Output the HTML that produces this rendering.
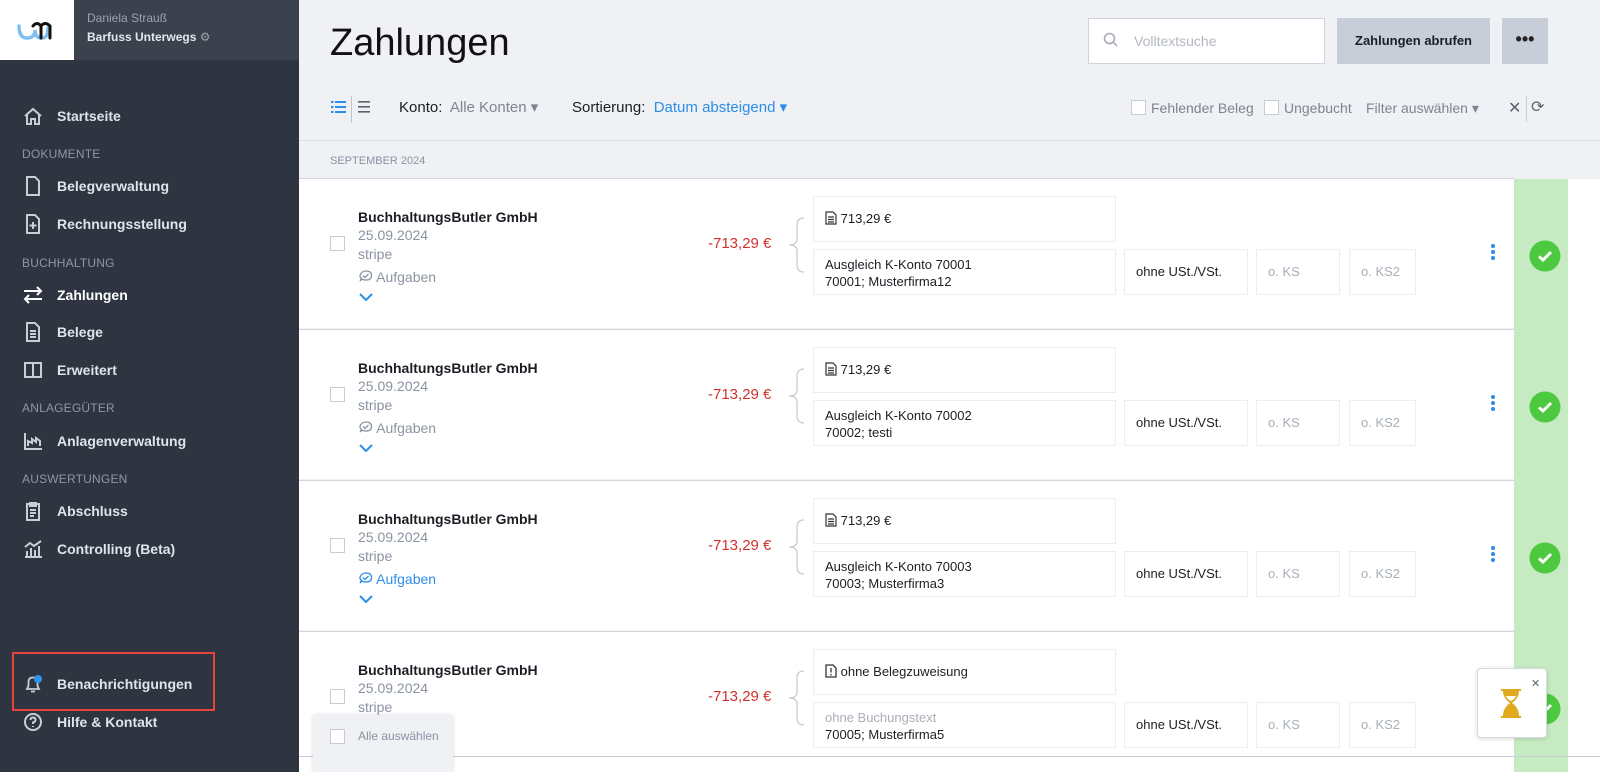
<!DOCTYPE html>
<html><head><meta charset="utf-8"><style>
*{box-sizing:border-box;margin:0;padding:0}
body{width:1600px;height:772px;overflow:hidden;font-family:"Liberation Sans",sans-serif;background:#eff1f5;position:relative;color:#222}
.a{position:absolute}
#sb{left:0;top:0;width:299px;height:772px;background:#2f3540}
#sbh{left:74px;top:0;width:225px;height:60px;background:#3b414d}
#logo{left:0;top:0;width:74px;height:60px;background:#fff}
.nav{left:57px;font-size:14px;color:#dfe3ea;font-weight:bold;white-space:nowrap}
.sec{left:22px;font-size:12px;color:#8e97a6;letter-spacing:.2px}
.ic{left:22px;width:22px;height:22px}
.row{left:299px;width:1215px;height:150px;background:#fff;border-top:1px solid #d3d7dd}
.nm{font-size:14px;font-weight:bold;color:#1b1e24}
.gr{font-size:14px;color:#8a93a1}
.box{border:1px solid #eceef1;background:#fff;font-size:13px;color:#1b1e24}
.cb{width:15px;height:15px;border:1px solid #c8ccd3;background:#fff}
</style></head><body>
<div id="sb" class="a"></div>
<div id="sbh" class="a"></div>
<div id="logo" class="a"><svg width="74" height="60"><path d="M19 26 q0 12 8 12 q8 0 8-8 q0 8 7 8 q6 0 6-10" fill="none" stroke="#7fc0f0" stroke-width="3.5" stroke-linecap="round"/><path d="M33 26 q4-5 8 0 v12 M41 26 q4-5 9 0 v12" fill="none" stroke="#111" stroke-width="3" stroke-linecap="round"/></svg></div>
<div class="a" style="left:87px;top:11px;font-size:12px;color:#9aa3b0">Daniela Strauß</div>
<div class="a" style="left:87px;top:30px;font-size:12px;color:#e4e7ec;font-weight:bold">Barfuss Unterwegs <span style="color:#9aa3b0;font-weight:normal">⚙</span></div>

<svg class="a ic" style="top:105px" viewBox="0 0 22 22"><path d="M3 11 L11 4 L19 11 M5 10 V19 H9 V14 H13 V19 H17 V10" fill="none" stroke="#c9ced6" stroke-width="2"/></svg>
<div class="a nav" style="top:108px">Startseite</div>
<div class="a sec" style="top:147px">DOKUMENTE</div>
<svg class="a ic" style="top:175px" viewBox="0 0 22 22"><path d="M5 2 H13 L17 6 V20 H5 Z" fill="none" stroke="#c9ced6" stroke-width="2"/></svg>
<div class="a nav" style="top:178px">Belegverwaltung</div>
<svg class="a ic" style="top:213px" viewBox="0 0 22 22"><path d="M5 2 H13 L17 6 V20 H5 Z M11 9 V16 M7.5 12.5 H14.5" fill="none" stroke="#c9ced6" stroke-width="2"/></svg>
<div class="a nav" style="top:216px">Rechnungsstellung</div>
<div class="a sec" style="top:256px">BUCHHALTUNG</div>
<svg class="a ic" style="top:284px" viewBox="0 0 22 22"><path d="M2 7 H19 M15 3 L19 7 L15 11 M20 15 H3 M7 11 L3 15 L7 19" fill="none" stroke="#fff" stroke-width="2"/></svg>
<div class="a nav" style="top:287px;color:#fff">Zahlungen</div>
<svg class="a ic" style="top:321px" viewBox="0 0 22 22"><path d="M5 2 H13 L17 6 V20 H5 Z M8 10 H14 M8 13 H14 M8 16 H14" fill="none" stroke="#c9ced6" stroke-width="2"/></svg>
<div class="a nav" style="top:324px">Belege</div>
<svg class="a ic" style="top:359px" viewBox="0 0 22 22"><path d="M3 4 H19 V18 H3 Z M11 4 V18" fill="none" stroke="#c9ced6" stroke-width="2"/></svg>
<div class="a nav" style="top:362px">Erweitert</div>
<div class="a sec" style="top:401px">ANLAGEGÜTER</div>
<svg class="a ic" style="top:430px" viewBox="0 0 22 22"><path d="M3 3 V19 H20 M6 16 V11 L10 13 V9 L14 12 V8 L18 11 V16" fill="none" stroke="#c9ced6" stroke-width="2"/></svg>
<div class="a nav" style="top:433px">Anlagenverwaltung</div>
<div class="a sec" style="top:472px">AUSWERTUNGEN</div>
<svg class="a ic" style="top:500px" viewBox="0 0 22 22"><path d="M5 4 H17 V20 H5 Z M8 3 H14 V6 H8 Z M8 10 H14 M8 13 H14 M8 16 H12" fill="none" stroke="#c9ced6" stroke-width="2"/></svg>
<div class="a nav" style="top:503px">Abschluss</div>
<svg class="a ic" style="top:538px" viewBox="0 0 22 22"><path d="M3 19 H20 M5 19 V13 M9 19 V10 M13 19 V12 M17 19 V8 M3 9 L8 5 L12 8 L19 3" fill="none" stroke="#c9ced6" stroke-width="2"/></svg>
<div class="a nav" style="top:541px">Controlling (Beta)</div>

<div class="a" style="left:12px;top:652px;width:203px;height:59px;border:2px solid #e5463b"></div>
<svg class="a ic" style="top:673px" viewBox="0 0 22 22"><path d="M5 16 H17 L15.5 13 V9 Q15.5 4.5 11 4.5 Q6.5 4.5 6.5 9 V13 Z M9 18.5 H13" fill="none" stroke="#c9ced6" stroke-width="1.8"/><circle cx="16" cy="6" r="4" fill="#2c95f0"/></svg>
<div class="a nav" style="top:676px">Benachrichtigungen</div>
<svg class="a ic" style="top:711px" viewBox="0 0 22 22"><circle cx="11" cy="11" r="8" fill="none" stroke="#c9ced6" stroke-width="2"/><path d="M8.5 9 Q8.5 6.5 11 6.5 Q13.5 6.5 13.5 9 Q13.5 10.5 11 11.5 V13 M11 15 V16" fill="none" stroke="#c9ced6" stroke-width="2"/></svg>
<div class="a nav" style="top:714px">Hilfe &amp; Kontakt</div>

<div class="a" style="left:330px;top:22px;font-size:38px;color:#111">Zahlungen</div>
<div class="a" style="left:1088px;top:18px;width:237px;height:46px;background:#fff;border:1px solid #cfd3da"></div>
<svg class="a" style="left:1103px;top:32px" width="16" height="16"><circle cx="6.5" cy="6.5" r="5" fill="none" stroke="#a3a9b3" stroke-width="1.5"/><path d="M10 10 L14 14" stroke="#a3a9b3" stroke-width="1.5"/></svg>
<div class="a" style="left:1134px;top:33px;font-size:14px;color:#b3b8c0">Volltextsuche</div>
<div class="a" style="left:1337px;top:18px;width:153px;height:46px;background:#c8ced8;font-size:13px;font-weight:bold;color:#1b1e24;text-align:center;line-height:46px">Zahlungen abrufen</div>
<div class="a" style="left:1502px;top:18px;width:46px;height:46px;background:#c8ced8;font-size:18px;font-weight:bold;text-align:center;line-height:42px">•••</div>

<svg class="a" style="left:331px;top:100px" width="16" height="14"><g fill="#2c8ee8"><rect x="0" y="1" width="2.5" height="2"/><rect x="4" y="1" width="11" height="2"/><rect x="0" y="6" width="2.5" height="2"/><rect x="4" y="6" width="11" height="2"/><rect x="0" y="11" width="2.5" height="2"/><rect x="4" y="11" width="11" height="2"/></g></svg>
<div class="a" style="left:351px;top:96px;width:1px;height:27px;background:#bfc4cc"></div>
<svg class="a" style="left:357px;top:100px" width="14" height="14"><g fill="#5b6270"><rect x="1" y="1" width="12" height="1.6"/><rect x="1" y="6" width="12" height="1.6"/><rect x="1" y="11" width="12" height="1.6"/></g></svg>
<div class="a" style="left:399px;top:98px;font-size:15px;color:#1b1e24">Konto:&nbsp; <span style="color:#7d8591">Alle Konten ▾</span></div>
<div class="a" style="left:572px;top:98px;font-size:15px;color:#1b1e24">Sortierung:&nbsp; <span style="color:#2c8ee8">Datum absteigend ▾</span></div>
<div class="a cb" style="left:1131px;top:100px"></div>
<div class="a" style="left:1151px;top:100px;font-size:14px;color:#7d8591">Fehlender Beleg</div>
<div class="a cb" style="left:1264px;top:100px"></div>
<div class="a" style="left:1284px;top:100px;font-size:14px;color:#7d8591">Ungebucht</div>
<div class="a" style="left:1366px;top:100px;font-size:14px;color:#7d8591">Filter auswählen ▾</div>
<div class="a" style="left:1508px;top:98px;font-size:16px;color:#5b6270">✕</div>
<div class="a" style="left:1526px;top:96px;width:1px;height:26px;background:#c8ccd3"></div>
<div class="a" style="left:1531px;top:97px;font-size:16px;color:#5b6270">⟳</div>
<div class="a" style="left:299px;top:140px;width:1301px;height:1px;background:#d6dbe3"></div>
<div class="a" style="left:330px;top:155px;font-size:11px;color:#8a93a1">SEPTEMBER 2024</div>

<div class="a" style="left:1514px;top:179px;width:54px;height:593px;background:#c6ebc2"></div>
<div class="a" style="left:1568px;top:179px;width:32px;height:593px;background:#fff"></div>

<!-- rows -->
<div class="a row" style="top:178px"></div>
<div class="a row" style="top:329px"></div>
<div class="a row" style="top:480px"></div>
<div class="a row" style="top:631px;height:141px"></div>
<div class="a" style="left:299px;top:756px;width:1301px;height:1px;background:#c8ccd3"></div>

<div id="rows"></div>
<script>
var d=[["70001","70001; Musterfirma12",0],["70002","70002; testi",0],["70003","70003; Musterfirma3",1],["","70005; Musterfirma5",2]];
var h="";
d.forEach(function(r,i){var T=179+i*151;
h+='<div class="a nm" style="left:358px;top:'+(T+30)+'px">BuchhaltungsButler GmbH</div>';
h+='<div class="a cb" style="left:330px;top:'+(T+57)+'px"></div>';
h+='<div class="a gr" style="left:358px;top:'+(T+48)+'px">25.09.2024</div>';
h+='<div class="a gr" style="left:358px;top:'+(T+67)+'px">stripe</div>';
if(i<3){var c=r[2]==1?'#2c8ee8':'#8a93a1';
h+='<div class="a" style="left:358px;top:'+(T+90)+'px;font-size:14px;color:'+c+'"><svg width="15" height="13" style="vertical-align:-1px"><path d="M2 11 L3.5 8.5 Q1 6.5 2.5 4 Q4.5 1 8 1 Q13.5 1 13.5 5.5 Q13.5 10 8 10 Q5 10 4 9 Z M5 5.5 L7 7.5 L10.5 4" fill="none" stroke="'+c+'" stroke-width="1.3"/></svg> Aufgaben</div>';
h+='<svg class="a" style="left:359px;top:'+(T+114)+'px" width="14" height="9"><path d="M1 1 L7 7 L13 1" fill="none" stroke="#2c8ee8" stroke-width="2"/></svg>';}
h+='<div class="a" style="left:708px;top:'+(T+56)+'px;font-size:15px;color:#d0312d">-713,29 €</div>';
h+='<svg class="a" style="left:786px;top:'+(T+38)+'px" width="20" height="56"><path d="M18 1 Q11 1 11 8 V22 Q11 28 3 28 Q11 28 11 34 V48 Q11 55 18 55" fill="none" stroke="#c8ccd3" stroke-width="1.3"/></svg>';
h+='<div class="a box" style="left:813px;top:'+(T+17)+'px;width:303px;height:46px;padding:14px 0 0 11px">'+(i<3?'<svg width="12" height="14" style="vertical-align:-2px"><path d="M1 1 H8 L11 4 V13 H1 Z M3 6 H9 M3 8.5 H9 M3 11 H9" fill="none" stroke="#333" stroke-width="1.2"/></svg> 713,29 €':'<svg width="12" height="14" style="vertical-align:-2px"><path d="M1 1 H8 L11 4 V13 H1 Z M6 4 V8.5 M6 10 V11.5" fill="none" stroke="#333" stroke-width="1.3"/></svg> ohne Belegzuweisung')+'</div>';
h+='<div class="a box" style="left:813px;top:'+(T+70)+'px;width:303px;height:46px;padding:6px 0 0 11px;line-height:17px">'+(r[0]?'Ausgleich K-Konto '+r[0]:'<span style="color:#a9afb8">ohne Buchungstext</span>')+'<br>'+r[1]+'</div>';
h+='<div class="a box" style="left:1124px;top:'+(T+70)+'px;width:124px;height:46px;line-height:44px;padding-left:11px">ohne USt./VSt.</div>';
h+='<div class="a box" style="left:1256px;top:'+(T+70)+'px;width:84px;height:46px;line-height:44px;padding-left:11px;color:#a9afb8">o. KS</div>';
h+='<div class="a box" style="left:1349px;top:'+(T+70)+'px;width:67px;height:46px;line-height:44px;padding-left:11px;color:#a9afb8">o. KS2</div>';
if(i<3)h+='<svg class="a" style="left:1490px;top:'+(T+64)+'px" width="6" height="18"><circle cx="3" cy="3" r="2" fill="#2c8ee8"/><circle cx="3" cy="9" r="2" fill="#2c8ee8"/><circle cx="3" cy="15" r="2" fill="#2c8ee8"/></svg>';
h+='<svg class="a" style="left:1529px;top:'+(T+61)+'px" width="32" height="32"><circle cx="16" cy="16" r="15.5" fill="#4cc93f"/><path d="M10 16.5 L14 20 L22 12" fill="none" stroke="#fff" stroke-width="3"/></svg>';
});
document.getElementById('rows').innerHTML=h;
</script>
<div class="a" style="left:313px;top:715px;width:140px;height:57px;background:#eff1f5;border-radius:3px;box-shadow:0 0 4px rgba(0,0,0,.15)"></div>
<div class="a cb" style="left:330px;top:729px"></div>
<div class="a" style="left:358px;top:729px;font-size:12px;color:#8a93a1">Alle auswählen</div>
<div class="a" style="left:1477px;top:668px;width:70px;height:70px;background:#fff;border:1px solid #d6dae0;border-radius:4px;box-shadow:0 1px 4px rgba(0,0,0,.15)"></div>
<div class="a" style="left:1531px;top:677px;font-size:11px;color:#5b6270">✕</div>
<svg class="a" style="left:1500px;top:689px" width="22" height="29"><path d="M1 1 H21 M1 28 H21" stroke="#e0aa1f" stroke-width="2"/><path d="M3 2 H19 Q19 9 12 14 Q19 19 19 27 H3 Q3 19 10 14 Q3 9 3 2 Z" fill="#e0aa1f"/><path d="M6 7 H16 Q15 10 11 12 Q7 10 6 7 Z" fill="#fff"/></svg>
</body></html>
